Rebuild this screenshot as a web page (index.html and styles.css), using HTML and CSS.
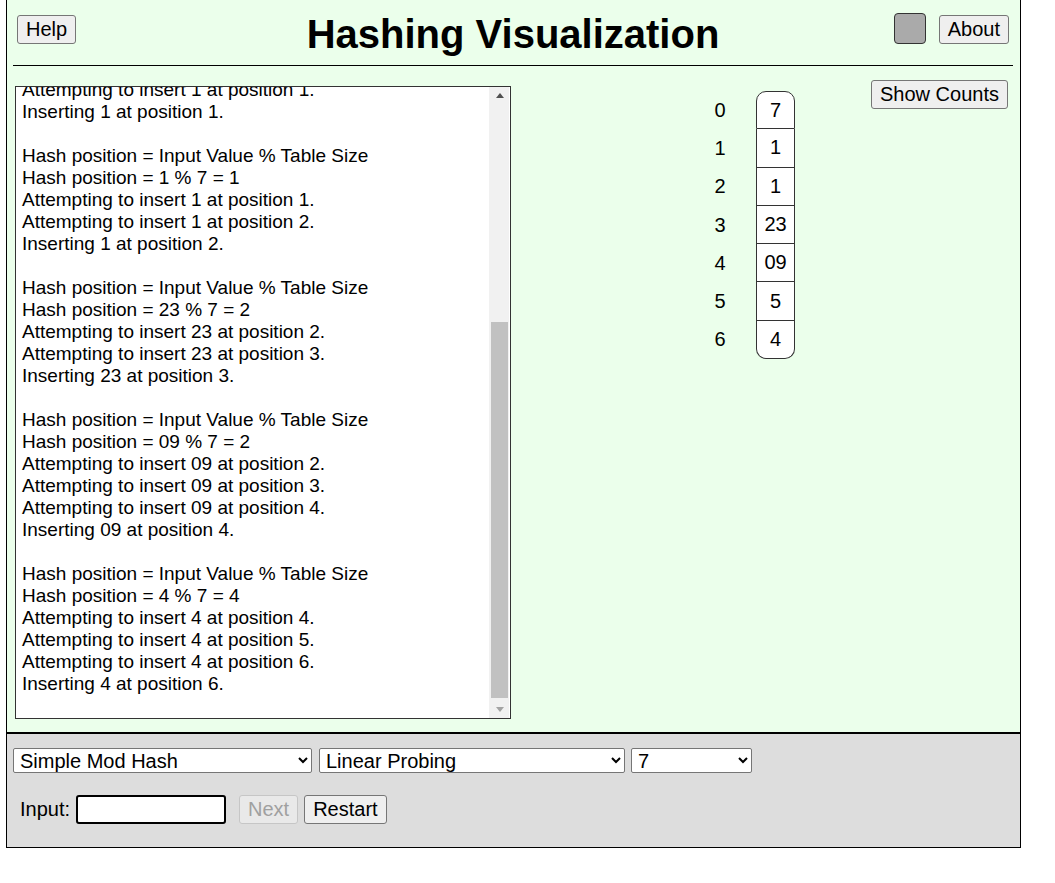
FILE: index.html
```html
<!DOCTYPE html>
<html>
<head>
<meta charset="utf-8">
<title>Hashing Visualization</title>
<link rel="stylesheet" href="styles.css">
</head>
<body>
<div class="frame">
  <div class="main">
    <div class="header">
      <div class="side left"><button class="btn">Help</button></div>
      <h1 class="title">Hashing Visualization</h1>
      <div class="side right"><span class="swatch"></span><button class="btn">About</button></div>
    </div>
    <hr class="rule">
    <div class="work">
      <div class="logbox">
        <div class="logview"><div class="logtext">Hash position = Input Value % Table Size
Hash position = 7 % 7 = 0
Attempting to insert 7 at position 0.
Inserting 7 at position 0.

Hash position = Input Value % Table Size
Hash position = 5 % 7 = 5
Attempting to insert 5 at position 5.
Inserting 5 at position 5.

Hash position = Input Value % Table Size
Hash position = 1 % 7 = 1
Attempting to insert 1 at position 1.
Inserting 1 at position 1.

Hash position = Input Value % Table Size
Hash position = 1 % 7 = 1
Attempting to insert 1 at position 1.
Attempting to insert 1 at position 2.
Inserting 1 at position 2.

Hash position = Input Value % Table Size
Hash position = 23 % 7 = 2
Attempting to insert 23 at position 2.
Attempting to insert 23 at position 3.
Inserting 23 at position 3.

Hash position = Input Value % Table Size
Hash position = 09 % 7 = 2
Attempting to insert 09 at position 2.
Attempting to insert 09 at position 3.
Attempting to insert 09 at position 4.
Inserting 09 at position 4.

Hash position = Input Value % Table Size
Hash position = 4 % 7 = 4
Attempting to insert 4 at position 4.
Attempting to insert 4 at position 5.
Attempting to insert 4 at position 6.
Inserting 4 at position 6.</div></div>
        <div class="vscroll" aria-hidden="true">
          <span class="arrow up"></span>
          <span class="track"><span class="thumb"></span></span>
          <span class="arrow down"></span>
        </div>
      </div>
      <div class="table">
        <span class="idx">0</span><span class="cell first">7</span>
        <span class="idx">1</span><span class="cell">1</span>
        <span class="idx">2</span><span class="cell">1</span>
        <span class="idx">3</span><span class="cell">23</span>
        <span class="idx">4</span><span class="cell">09</span>
        <span class="idx">5</span><span class="cell">5</span>
        <span class="idx">6</span><span class="cell last">4</span>
      </div>
      <button class="btn counts">Show Counts</button>
    </div>
  </div>
  <div class="controls">
    <div class="selects">
      <select class="sel sel-hash"><option>Simple Mod Hash</option></select>
      <select class="sel sel-probe"><option>Linear Probing</option></select>
      <select class="sel sel-size"><option>7</option></select>
    </div>
    <div class="inputs">
      <label class="lbl" for="val">Input:</label>
      <input id="val" class="field" type="text" autofocus>
      <button class="btn" disabled>Next</button>
      <button class="btn">Restart</button>
    </div>
  </div>
</div>
</body>
</html>
```
FILE: styles.css
```css
html, body {
  margin: 0;
  padding: 0;
  background: #ffffff;
  font-family: "Liberation Sans", Arial, sans-serif;
  font-size: 20px;
  color: #000;
}
.frame {
  margin-left: 6px;
  width: 1013px;
  border: 1px solid #000;
  border-top: none;
}
.main {
  background: #ebffeb;
  padding: 0 7px 13px 6px;
}
.header {
  display: grid;
  grid-template-columns: 1fr auto 1fr;
  align-items: center;
  height: 59px;
  padding: 0 4px 0 4px;
}
.side {
  display: flex;
  align-items: center;
}
.side.right {
  justify-content: flex-end;
}
.btn {
  font-family: "Liberation Sans", Arial, sans-serif;
  font-size: 20px;
  padding: 0 8px;
  background: #efefef;
  border: 1px solid #767676;
  border-radius: 3px;
  color: #000;
  height: 29px;
}
.btn:disabled {
  color: #a0a0a0;
  border-color: #c6c6c6;
  background: #e9e9e9;
}
.title {
  font-size: 40px;
  font-weight: bold;
  margin: 8px 0 0 0;
  line-height: 46px;
}
.swatch {
  width: 30px;
  height: 29px;
  background: #aaaaaa;
  border: 1px solid #333;
  border-radius: 4px;
  margin-right: 13px;
  margin-top: -2px;
}
.rule {
  border: none;
  border-top: 1px solid #000;
  margin: 6px 0 0 0;
}
.work {
  display: flex;
  align-items: flex-start;
  padding-top: 14px;
}
.logbox {
  margin: 6px 0 0 2px;
  width: 496px;
  height: 633px;
  box-sizing: border-box;
  border: 1px solid #333;
  background: #fff;
  display: flex;
}
.logview {
  flex: 1;
  min-width: 0;
  overflow: hidden;
  display: flex;
  flex-direction: column;
  justify-content: flex-end;
  padding: 0 0 23px 6px;
}
.logtext {
  flex: none;
  white-space: pre-wrap;
  font-size: 19px;
  line-height: 22px;
}
.vscroll {
  width: 20px;
  margin-right: 1px;
  background: #f1f1f1;
  display: flex;
  flex-direction: column;
}
.arrow {
  height: 17px;
  flex: none;
  display: flex;
  justify-content: center;
  align-items: center;
}
.arrow.up::before {
  content: "";
  border-left: 4.5px solid transparent;
  border-right: 4.5px solid transparent;
  border-bottom: 5px solid #505050;
  margin-left: 1px;
}
.arrow.down::before {
  content: "";
  border-left: 4.5px solid transparent;
  border-right: 4.5px solid transparent;
  border-top: 5px solid #a3a3a3;
  margin-left: 1px;
}
.track {
  flex: 1;
  display: flex;
  flex-direction: column;
  justify-content: flex-end;
  padding: 0 1px 3px 2px;
}
.thumb {
  height: 376px;
  background: #c1c1c1;
}
.table {
  display: grid;
  grid-template-columns: 30px 39px;
  grid-auto-rows: 38.3px;
  column-gap: 21px;
  margin: 11px 0 0 194px;
  font-size: 20px;
}
.idx {
  display: flex;
  align-items: center;
  justify-content: center;
}
.cell {
  display: flex;
  align-items: center;
  justify-content: center;
  background: #fff;
  border: 1px solid #333;
  border-top: none;
}
.cell.first {
  border-top: 1px solid #333;
  border-radius: 10px 10px 0 0;
}
.cell.last {
  border-radius: 0 0 10px 10px;
}
.counts {
  margin-left: auto;
  margin-right: 5px;
}
.controls {
  background: #dddddd;
  border-top: 2px solid #000;
  padding: 14px 6px 23px 6px;
}
.selects {
  display: flex;
}
.sel {
  font-family: "Liberation Sans", Arial, sans-serif;
  font-size: 20px;
  height: 25px;
  background: #fff;
  border: 1px solid #767676;
  border-radius: 2px;
  color: #000;
  padding: 0 2px;
}
.sel-hash { width: 299px; }
.sel-probe { width: 306px; margin-left: 7px; }
.sel-size { width: 121px; margin-left: 6px; }
.inputs {
  display: flex;
  align-items: center;
  margin-top: 22px;
  padding-left: 7px;
}
.lbl {
  margin-right: 6px;
}
.field {
  width: 150px;
  height: 29px;
  box-sizing: border-box;
  border: 2px solid #000;
  border-radius: 3px;
  background: #fff;
  font-family: "Liberation Sans", Arial, sans-serif;
  font-size: 20px;
  margin-right: 13px;
  outline: none;
}
.inputs .btn + .btn {
  margin-left: 6px;
}
```
